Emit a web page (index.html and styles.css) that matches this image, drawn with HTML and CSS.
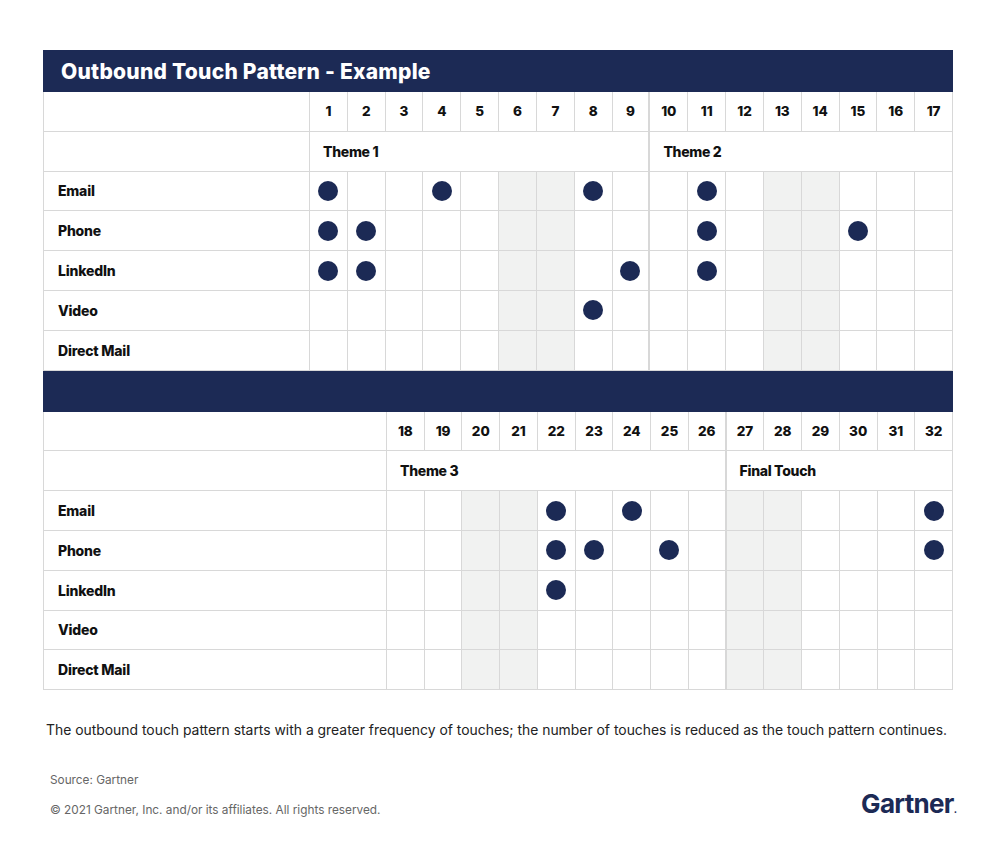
FILE: index.html
```html
<!DOCTYPE html>
<html>
<head>
<meta charset="utf-8">
<link rel="stylesheet" href="styles.css">
</head>
<body>
<div class="page">
  <div class="bar"><h1 class="title">Outbound Touch Pattern - Example</h1></div>

  <div class="grid top">
    <div class="lab"></div>
    <div class="n">1</div><div class="n">2</div><div class="n">3</div><div class="n">4</div><div class="n">5</div><div class="n">6</div><div class="n">7</div><div class="n">8</div><div class="n dv">9</div><div class="n">10</div><div class="n">11</div><div class="n">12</div><div class="n">13</div><div class="n">14</div><div class="n">15</div><div class="n">16</div><div class="n">17</div>

    <div class="lab"></div>
    <div class="theme dv s9">Theme 1</div><div class="theme s8">Theme 2</div>

    <div class="lab">Email</div>
    <div class="c"><span class="dot"></span></div><div class="c"></div><div class="c"></div><div class="c"><span class="dot"></span></div><div class="c"></div><div class="c sh"></div><div class="c sh"></div><div class="c"><span class="dot"></span></div><div class="c dv"></div><div class="c"></div><div class="c"><span class="dot"></span></div><div class="c"></div><div class="c sh"></div><div class="c sh"></div><div class="c"></div><div class="c"></div><div class="c"></div>

    <div class="lab">Phone</div>
    <div class="c"><span class="dot"></span></div><div class="c"><span class="dot"></span></div><div class="c"></div><div class="c"></div><div class="c"></div><div class="c sh"></div><div class="c sh"></div><div class="c"></div><div class="c dv"></div><div class="c"></div><div class="c"><span class="dot"></span></div><div class="c"></div><div class="c sh"></div><div class="c sh"></div><div class="c"><span class="dot"></span></div><div class="c"></div><div class="c"></div>

    <div class="lab">LinkedIn</div>
    <div class="c"><span class="dot"></span></div><div class="c"><span class="dot"></span></div><div class="c"></div><div class="c"></div><div class="c"></div><div class="c sh"></div><div class="c sh"></div><div class="c"></div><div class="c dv"><span class="dot"></span></div><div class="c"></div><div class="c"><span class="dot"></span></div><div class="c"></div><div class="c sh"></div><div class="c sh"></div><div class="c"></div><div class="c"></div><div class="c"></div>

    <div class="lab">Video</div>
    <div class="c"></div><div class="c"></div><div class="c"></div><div class="c"></div><div class="c"></div><div class="c sh"></div><div class="c sh"></div><div class="c"><span class="dot"></span></div><div class="c dv"></div><div class="c"></div><div class="c"></div><div class="c"></div><div class="c sh"></div><div class="c sh"></div><div class="c"></div><div class="c"></div><div class="c"></div>

    <div class="lab">Direct Mail</div>
    <div class="c"></div><div class="c"></div><div class="c"></div><div class="c"></div><div class="c"></div><div class="c sh"></div><div class="c sh"></div><div class="c"></div><div class="c dv"></div><div class="c"></div><div class="c"></div><div class="c"></div><div class="c sh"></div><div class="c sh"></div><div class="c"></div><div class="c"></div><div class="c"></div>
  </div>

  <div class="band"></div>

  <div class="grid bottom">
    <div class="lab"></div>
    <div class="n">18</div><div class="n">19</div><div class="n">20</div><div class="n">21</div><div class="n">22</div><div class="n">23</div><div class="n">24</div><div class="n">25</div><div class="n dv">26</div><div class="n">27</div><div class="n">28</div><div class="n">29</div><div class="n">30</div><div class="n">31</div><div class="n">32</div>

    <div class="lab"></div>
    <div class="theme dv s9">Theme 3</div><div class="theme s6">Final Touch</div>

    <div class="lab">Email</div>
    <div class="c"></div><div class="c"></div><div class="c sh"></div><div class="c sh"></div><div class="c"><span class="dot"></span></div><div class="c"></div><div class="c"><span class="dot"></span></div><div class="c"></div><div class="c dv"></div><div class="c sh"></div><div class="c sh"></div><div class="c"></div><div class="c"></div><div class="c"></div><div class="c"><span class="dot"></span></div>

    <div class="lab">Phone</div>
    <div class="c"></div><div class="c"></div><div class="c sh"></div><div class="c sh"></div><div class="c"><span class="dot"></span></div><div class="c"><span class="dot"></span></div><div class="c"></div><div class="c"><span class="dot"></span></div><div class="c dv"></div><div class="c sh"></div><div class="c sh"></div><div class="c"></div><div class="c"></div><div class="c"></div><div class="c"><span class="dot"></span></div>

    <div class="lab">LinkedIn</div>
    <div class="c"></div><div class="c"></div><div class="c sh"></div><div class="c sh"></div><div class="c"><span class="dot"></span></div><div class="c"></div><div class="c"></div><div class="c"></div><div class="c dv"></div><div class="c sh"></div><div class="c sh"></div><div class="c"></div><div class="c"></div><div class="c"></div><div class="c"></div>

    <div class="lab">Video</div>
    <div class="c"></div><div class="c"></div><div class="c sh"></div><div class="c sh"></div><div class="c"></div><div class="c"></div><div class="c"></div><div class="c"></div><div class="c dv"></div><div class="c sh"></div><div class="c sh"></div><div class="c"></div><div class="c"></div><div class="c"></div><div class="c"></div>

    <div class="lab">Direct Mail</div>
    <div class="c"></div><div class="c"></div><div class="c sh"></div><div class="c sh"></div><div class="c"></div><div class="c"></div><div class="c"></div><div class="c"></div><div class="c dv"></div><div class="c sh"></div><div class="c sh"></div><div class="c"></div><div class="c"></div><div class="c"></div><div class="c"></div>
  </div>

  <p class="caption">The outbound touch pattern starts with a greater frequency of touches; the number of touches is reduced as the touch pattern continues.</p>

  <div class="foot">
    <div class="notes">
      <p class="source">Source: Gartner</p>
      <p class="copy">© 2021 Gartner, Inc. and/or its affiliates. All rights reserved.</p>
    </div>
    <div class="logo">Gartner<span class="reg">.</span></div>
  </div>
</div>
</body>
</html>
```

FILE: styles.css
```css
* { box-sizing: border-box; }

body {
  margin: 0;
  background: #ffffff;
  font-family: Inter, "Liberation Sans", sans-serif;
  color: #111111;
}

.page {
  width: 910px;
  margin: 50px 0 0 43px;
}

.bar {
  height: 42px;
  background: #1c2a55;
  display: flex;
  align-items: center;
  padding-left: 18px;
}

.title {
  margin: 0;
  color: #ffffff;
  font-size: 21px;
  font-weight: 800;
  letter-spacing: 0.25px;
}

.grid {
  display: grid;
  grid-auto-rows: 39.8px;
  border-left: 1px solid #d8d8d8;
}

.top { grid-template-columns: 266px repeat(17, 1fr); }
.bottom { grid-template-columns: 343px repeat(15, 1fr); }

.grid > div {
  border-right: 1px solid #d8d8d8;
  border-bottom: 1px solid #d8d8d8;
}

.grid > div.dv { border-right: 2px solid #d8d8d8; }

.lab {
  display: flex;
  align-items: center;
  padding-left: 14px;
  font-size: 14px;
  font-weight: 800;
  letter-spacing: -0.2px;
}

.n {
  display: flex;
  align-items: center;
  justify-content: center;
  font-size: 13.5px;
  font-weight: 800;
}

.theme {
  display: flex;
  align-items: center;
  padding-left: 13px;
  font-size: 14px;
  font-weight: 800;
  letter-spacing: -0.3px;
}

.s9 { grid-column: span 9; }
.s8 { grid-column: span 8; }
.s6 { grid-column: span 6; }

.c {
  display: flex;
  align-items: center;
  justify-content: center;
}

.sh { background: #f1f2f1; }

.dot {
  width: 20px;
  height: 20px;
  border-radius: 50%;
  background: #1c2a55;
}

.band {
  height: 41px;
  background: #1c2a55;
}

.caption {
  margin: 32px 0 0 3px;
  font-size: 13.9px;
  color: #222222;
  white-space: nowrap;
}

.foot {
  display: flex;
  justify-content: space-between;
  align-items: flex-end;
  margin-top: 35px;
  padding-left: 7px;
}

.source, .copy {
  margin: 0;
  font-size: 11.8px;
  color: #666666;
}

.copy { margin-top: 16px; }

.logo {
  font-size: 26px;
  font-weight: 700;
  color: #1c2a55;
  letter-spacing: -0.7px;
  line-height: 1;
  margin-right: -4px;
  margin-bottom: 0;
}

.reg {
  font-size: 10px;
  letter-spacing: 0;
}
```
